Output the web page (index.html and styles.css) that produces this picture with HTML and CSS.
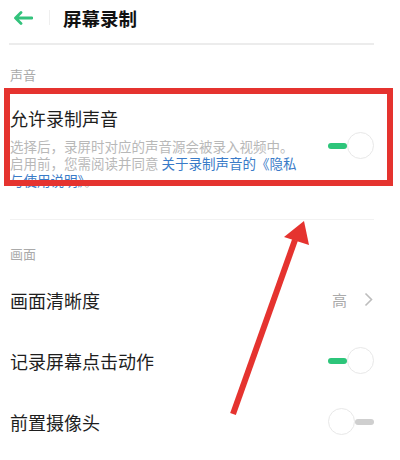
FILE: index.html
```html
<!DOCTYPE html>
<html lang="zh-CN">
<head>
  <meta charset="UTF-8">
  <meta name="viewport" content="width=device-width, initial-scale=1.0">
  <title>屏幕录制</title>
  <link rel="stylesheet" href="styles.css">
</head>
<body>
  <div class="page">
    <div class="header">
      <svg class="back" width="20" height="14" viewBox="0 0 20 14">
        <path d="M19 7H3M8 1.5L2.5 7 8 12.5" fill="none" stroke="#33c27c" stroke-width="2.8" stroke-linecap="round" stroke-linejoin="round"/>
      </svg>
      <span class="sep"></span>
      <h1 class="title">屏幕录制</h1>
    </div>
    <div class="divider thick"></div>

    <div class="section-label first">声音</div>
    <div class="item tall">
      <div class="item-text">
        <div class="item-title">允许录制声音</div>
        <div class="item-desc">选择后，录屏时对应的声音源会被录入视频中。<br>启用前，您需阅读并同意 <span class="link">关于录制声音的《隐私与使用说明》</span>。</div>
      </div>
      <div class="switch on"><span class="track"></span><span class="knob"></span></div>
    </div>
    <div class="divider thin"></div>

    <div class="section-label">画面</div>
    <div class="item row">
      <div class="item-title">画面清晰度</div>
      <div class="value">
        <span>高</span>
        <svg width="9" height="15" viewBox="0 0 9 15"><path d="M1.5 1.5L7.5 7.5 1.5 13.5" fill="none" stroke="#bdbdbd" stroke-width="1.6"/></svg>
      </div>
    </div>
    <div class="item row">
      <div class="item-title">记录屏幕点击动作</div>
      <div class="switch on"><span class="track"></span><span class="knob"></span></div>
    </div>
    <div class="item row">
      <div class="item-title">前置摄像头</div>
      <div class="switch off"><span class="knob"></span><span class="track"></span></div>
    </div>

    <div class="highlight"></div>
    <svg class="pointer" width="400" height="460" viewBox="0 0 400 460">
      <line x1="233" y1="414" x2="295" y2="240" stroke="#e5332f" stroke-width="6"/>
      <polygon points="304,221 284,237 309,245" fill="#e5332f"/>
    </svg>
  </div>
</body>
</html>
```

FILE: styles.css
```css
* {
  box-sizing: border-box;
}
body {
  margin: 0;
  background: #fff;
  font-family: "Noto Sans CJK SC", "Noto Sans", sans-serif;
  color: #222;
}
.page {
  position: relative;
  width: 400px;
  height: 460px;
  padding: 0 26px 0 10px;
  overflow: hidden;
}
.header {
  display: flex;
  align-items: center;
  height: 35px;
  margin-bottom: 8px;
}
.back {
  margin-left: 3px;
}
.sep {
  width: 1px;
  height: 15px;
  background: #efefef;
  margin-left: 16px;
}
.title {
  margin: 0 0 0 13px;
  font-size: 18.5px;
  font-weight: bold;
  color: #111;
  line-height: 24px;
}
.divider.thick {
  height: 2px;
  background: #ececec;
  margin-left: -1px;
}
.divider.thin {
  height: 1px;
  background: #f2f2f2;
  margin-top: 30px;
}
.section-label {
  font-size: 13px;
  line-height: 20px;
  color: #aaa;
  margin-top: 24px;
}
.section-label.first {
  margin-top: 20px;
}
.item {
  display: flex;
  align-items: center;
  justify-content: space-between;
}
.item.tall {
  margin-top: 21px;
}
.item.tall .switch {
  margin-top: -4px;
}
.item.row {
  height: 61px;
}
.section-label + .item.row {
  margin-top: 5px;
}
.item-title {
  font-size: 18px;
  line-height: 24px;
  color: #1e1e1e;
}
.item-desc {
  width: 300px;
  margin-top: 8px;
  font-size: 13.5px;
  line-height: 17px;
  color: #b8b8b8;
}
.link {
  color: #3a7bc8;
}
.value {
  display: flex;
  align-items: center;
  gap: 17px;
  font-size: 15px;
  color: #aaa;
  margin-right: 1px;
}
.switch {
  display: flex;
  align-items: center;
  width: 46px;
  height: 28px;
}
.track {
  width: 19px;
  height: 6px;
  border-radius: 3px;
  background: #2dc57a;
}
.switch.off .track {
  background: #cfcfcf;
}
.knob {
  width: 27px;
  height: 27px;
  border-radius: 50%;
  border: 1px solid #e8e8e8;
  background: #fff;
}
.highlight {
  position: absolute;
  left: 4px;
  top: 88px;
  width: 389px;
  height: 98px;
  border: 6px solid #e5332f;
}
.pointer {
  position: absolute;
  left: 0;
  top: 0;
}
```
